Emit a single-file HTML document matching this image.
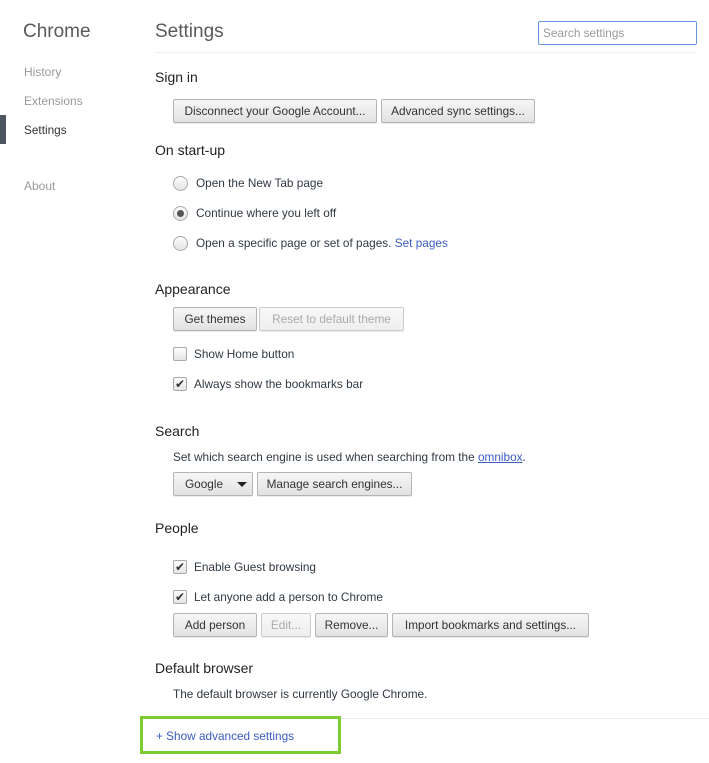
<!DOCTYPE html>
<html><head><meta charset="utf-8"><style>
body{margin:0;width:709px;height:763px;background:#fff;font-family:"Liberation Sans",sans-serif;font-size:11.8px;color:#303942;position:relative;overflow:hidden}
.a{position:absolute;white-space:nowrap;line-height:16px}
.h{font-size:14px;color:#222}
.nav{color:#999;font-size:12px}
.b{position:absolute;height:22px;border:1px solid #b4b4b4;border-radius:2px;background:linear-gradient(#f6f6f6,#e2e2e2);box-shadow:0 1px 0 rgba(0,0,0,.08);font-size:11.8px;color:#333;text-align:center;line-height:22px;box-sizing:content-box}
.dis{color:#aaa;border-color:#ccc;background:linear-gradient(#f8f8f8,#eee)}
.r{position:absolute;width:13px;height:13px;border:1px solid #aaa;border-radius:50%;background:linear-gradient(#fdfdfd,#e4e4e4)}
.c{position:absolute;width:12px;height:12px;border:1px solid #aaa;border-radius:2px;background:linear-gradient(#fdfdfd,#e4e4e4)}
.k{position:absolute;font-size:12px;line-height:12px;color:#333}
</style></head><body>
<div class="a" style="left:23px;top:20px;font-size:19px;line-height:24px;color:#5a5a5a">Chrome</div>
<div class="a" style="left:155px;top:20px;font-size:19px;line-height:24px;color:#5a5a5a">Settings</div>
<div style="position:absolute;left:538px;top:21px;width:157px;height:22px;border:1px solid #6a95e0;border-radius:2px"></div>
<div class="a" style="left:543px;top:25px;color:#999">Search settings</div>
<div style="position:absolute;left:155px;top:52px;width:542px;height:1px;background:#eee"></div>

<div class="a nav" style="left:24px;top:64px">History</div>
<div class="a nav" style="left:24px;top:93px">Extensions</div>
<div style="position:absolute;left:0;top:115px;width:6px;height:29px;background:#4d5560"></div>
<div class="a" style="left:24px;top:122px;color:#333">Settings</div>
<div class="a nav" style="left:24px;top:178px">About</div>

<div class="a h" style="left:155px;top:69px">Sign in</div>
<div class="b" style="left:173px;top:99px;width:202px">Disconnect your Google Account...</div>
<div class="b" style="left:381px;top:99px;width:152px">Advanced sync settings...</div>

<div class="a h" style="left:155px;top:142px">On start-up</div>
<div class="r" style="left:173px;top:176px"></div><div class="a" style="left:196px;top:175px">Open the New Tab page</div>
<div class="r" style="left:173px;top:206px"></div><div style="position:absolute;left:177px;top:210px;width:7px;height:7px;border-radius:50%;background:#555"></div><div class="a" style="left:196px;top:205px">Continue where you left off</div>
<div class="r" style="left:173px;top:236px"></div><div class="a" style="left:196px;top:235px">Open a specific page or set of pages. <span style="color:#3b5bc5">Set pages</span></div>

<div class="a h" style="left:155px;top:281px">Appearance</div>
<div class="b" style="left:173px;top:307px;width:82px">Get themes</div>
<div class="b dis" style="left:259px;top:307px;width:143px">Reset to default theme</div>
<div class="c" style="left:173px;top:347px"></div><div class="a" style="left:194px;top:346px">Show Home button</div>
<div class="c" style="left:173px;top:377px"></div><div class="k" style="left:175px;top:378px">✔</div><div class="a" style="left:194px;top:376px">Always show the bookmarks bar</div>

<div class="a h" style="left:155px;top:423px">Search</div>
<div class="a" style="left:173px;top:449px">Set which search engine is used when searching from the <span style="color:#3b5bc5;text-decoration:underline">omnibox</span>.</div>
<div class="b" style="left:173px;top:472px;width:78px;text-align:left"><span style="margin-left:11px">Google</span><span style="position:absolute;left:63px;top:9px;border:5px solid transparent;border-top:5px solid #222;border-bottom:0"></span></div>
<div class="b" style="left:257px;top:472px;width:153px">Manage search engines...</div>

<div class="a h" style="left:155px;top:520px">People</div>
<div class="c" style="left:173px;top:560px"></div><div class="k" style="left:175px;top:561px">✔</div><div class="a" style="left:194px;top:559px">Enable Guest browsing</div>
<div class="c" style="left:173px;top:590px"></div><div class="k" style="left:175px;top:591px">✔</div><div class="a" style="left:194px;top:589px">Let anyone add a person to Chrome</div>
<div class="b" style="left:173px;top:613px;width:82px">Add person</div>
<div class="b dis" style="left:261px;top:613px;width:48px">Edit...</div>
<div class="b" style="left:315px;top:613px;width:71px">Remove...</div>
<div class="b" style="left:392px;top:613px;width:195px">Import bookmarks and settings...</div>

<div class="a h" style="left:155px;top:660px">Default browser</div>
<div class="a" style="left:173px;top:686px">The default browser is currently Google Chrome.</div>
<div style="position:absolute;left:140px;top:718px;width:569px;height:1px;background:#eee"></div>
<div style="position:absolute;left:140px;top:716px;width:195px;height:32px;border:3px solid #7dcc32"></div>
<div class="a" style="left:156px;top:728px;color:#3b5bc5">+ Show advanced settings</div>
</body></html>
